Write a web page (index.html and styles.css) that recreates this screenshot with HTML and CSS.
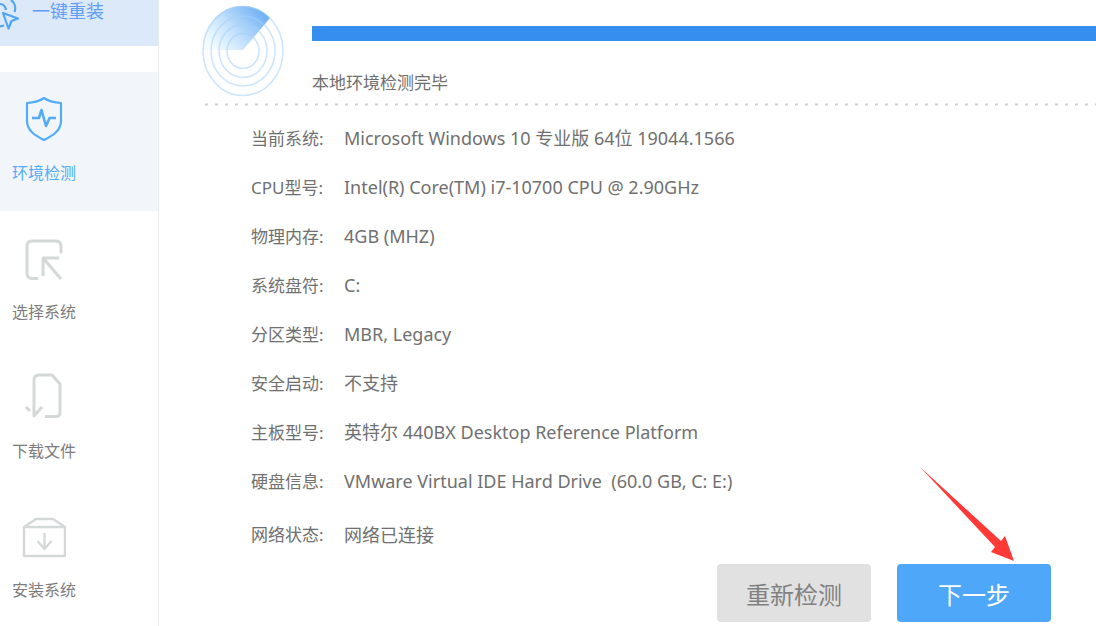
FILE: index.html
```html
<!DOCTYPE html>
<html lang="zh-CN">
<head>
<meta charset="utf-8">
<title>一键重装</title>
<link rel="stylesheet" href="styles.css">
</head>
<body>
<div class="app">
  <aside class="sidebar">
    <a class="brand" href="#">
      <svg class="brand-icon" width="20" height="32" viewBox="0 0 20 32" fill="none" stroke="#4fa6f7" stroke-width="2.2">
        <path d="M11 0C15 3 16 8 14.500 12"/>
        <path d="M0 4Q5 4 6 10"/>
        <path d="M0 26.500L4 25.500"/>
        <path d="M3 13L18 18.500L11.500 21L8.500 28.500Z" stroke-linejoin="round"/>
      </svg>
      <span>一键重装</span>
    </a>
    <nav class="steps">
      <a class="step active" href="#">
        <svg width="44" height="48" viewBox="0 0 44 48" fill="none" stroke="currentColor" stroke-width="2.2" stroke-linejoin="round">
          <path d="M22 3C17 6.500 11 7.500 5 8V26C5 36 14 41 22 45C30 41 39 36 39 26V8C33 7.500 27 6.500 22 3Z"/>
          <path d="M10 23H17L19.500 15L24 31L27.500 23H34" stroke-width="2.6"/>
        </svg>
        <span>环境检测</span>
      </a>
      <a class="step" href="#">
        <svg width="44" height="48" viewBox="0 0 44 48" fill="none" stroke="#d5d8d8" stroke-width="3" stroke-linecap="round" stroke-linejoin="round">
          <path d="M39 18V12Q39 7 34 7H10Q5 7 5 12V39Q5 44.500 10 44.500H15"/>
          <path d="M21 42V24H37M21 24L39 45" stroke-linecap="butt"/>
        </svg>
        <span>选择系统</span>
      </a>
      <a class="step" href="#">
        <svg width="44" height="48" viewBox="0 0 44 48" fill="none" stroke="#d5d8d8" stroke-width="3" stroke-linejoin="round">
          <path d="M4 34L8 38M20 34L12 43V7Q12 2 17 2H30L38 11V39Q38 43.500 34 43.500H23"/>
        </svg>
        <span>下载文件</span>
      </a>
      <a class="step" href="#">
        <svg width="44" height="48" viewBox="0 0 44 48" fill="none" stroke="#d5d8d8" stroke-width="2.4" stroke-linejoin="round">
          <path d="M2 15H43V44H2ZM2 15L14 7H31L43 15"/>
          <path d="M22.500 21V37M15.500 29L22.500 37L29.500 29"/>
        </svg>
        <span>安装系统</span>
      </a>
    </nav>
  </aside>

  <main class="content">
    <header class="status">
      <svg width="84" height="92" viewBox="0 0 84 92" fill="none">
        <defs>
          <linearGradient id="sweep" x1="0" y1="0.900" x2="1" y2="0.300">
            <stop offset="0.100" stop-color="#f4fcff"/>
            <stop offset="0.500" stop-color="#c2e0fc"/>
            <stop offset="1" stop-color="#6eb0f4"/>
          </linearGradient>
        </defs>
        <path d="M42 45H1C2 20 19 1 42 1C52 1 61 5 69 13Z" fill="url(#sweep)"/>
        <g stroke="#a6cffa" stroke-opacity="0.550" stroke-width="1.600">
          <ellipse cx="42" cy="46" rx="40" ry="44.500"/>
          <ellipse cx="42" cy="46" rx="32" ry="35"/>
          <ellipse cx="42" cy="46" rx="24" ry="26.500"/>
          <ellipse cx="42" cy="46" rx="16" ry="17.500"/>
        </g>
      </svg>
      <div class="status-text">
        <div class="bar" role="progressbar" aria-valuenow="100" aria-label="本地环境检测"></div>
        <p>本地环境检测完毕</p>
      </div>
    </header>
    <svg class="divider" height="3" aria-hidden="true"><line x1="2" y1="1.500" x2="100%" y2="1.500" stroke="#cfcfcf" stroke-width="2" stroke-dasharray="3 7"/></svg>

    <dl class="info">
      <div><dt>当前系统:</dt><dd>Microsoft Windows 10 专业版 64位 19044.1566</dd></div>
      <div><dt>CPU型号:</dt><dd>Intel(R) Core(TM) i7-10700 CPU @ 2.90GHz</dd></div>
      <div><dt>物理内存:</dt><dd>4GB (MHZ)</dd></div>
      <div><dt>系统盘符:</dt><dd>C:</dd></div>
      <div><dt>分区类型:</dt><dd>MBR, Legacy</dd></div>
      <div><dt>安全启动:</dt><dd>不支持</dd></div>
      <div><dt>主板型号:</dt><dd>英特尔 440BX Desktop Reference Platform</dd></div>
      <div><dt>硬盘信息:</dt><dd>VMware Virtual IDE Hard Drive&nbsp; (60.0 GB, C: E:)</dd></div>
      <div><dt>网络状态:</dt><dd>网络已连接</dd></div>
    </dl>

    <footer class="actions">
      <button class="btn" type="button">重新检测</button>
      <div class="next">
        <button class="btn primary" type="button">下一步</button>
        <svg class="pointer" width="96" height="96" viewBox="0 0 96 96" aria-hidden="true">
          <path d="M2 1L83 75L87 70L96 95L73 86L77 81Z" fill="#ff3936"/>
        </svg>
      </div>
    </footer>
  </main>
</div>
</body>
</html>
```
FILE: styles.css
```css
* { box-sizing: border-box; }

body {
  margin: 0;
  background: #fff;
  color: #707070;
  font-family: "Noto Sans", "Noto Sans CJK SC", sans-serif;
  font-size: 17px;
}

.app {
  display: flex;
  height: 100vh;
  overflow: hidden;
}

.sidebar {
  flex: 0 0 159px;
  border-right: 1px solid #e8eaec;
}

.brand {
  display: flex;
  gap: 12px;
  height: 46px;
  background: #dce9f9;
  color: #5f9ef5;
  font-size: 18px;
  line-height: 22px;
  text-decoration: none;
}

.steps { padding-top: 26px; }

.step {
  display: flex;
  flex-direction: column;
  align-items: flex-start;
  gap: 18px;
  height: 139px;
  padding: 23px 12px 0;
  color: #7c7c7c;
  font-size: 16px;
  line-height: 24px;
  text-decoration: none;
}

.step svg { margin-left: 10px; }

.step.active {
  background: #f2f6fb;
  color: #53acf8;
}

.content {
  flex: 1;
  min-width: 0;
}

.status {
  display: flex;
  gap: 27px;
  padding: 5px 0 0 42px;
}

.status-text {
  flex: 1;
  padding-top: 21px;
}

.status-text p {
  margin: 0;
  padding-top: 30px;
  line-height: 24px;
}

.bar {
  height: 15px;
  background: #368eef;
}

.divider {
  display: block;
  width: calc(100% - 44px);
  margin: 6px 0 0 44px;
}

.info {
  margin: 0;
  padding: 8px 0 0 92px;
}

.info div {
  display: flex;
  height: 49px;
  line-height: 49px;
}

.info div:last-child {
  height: 54px;
  line-height: 58px;
}

.info dt { width: 93px; }

.info dd {
  margin: 0;
  font-size: 18px;
}

.actions {
  display: flex;
  justify-content: flex-end;
  gap: 26px;
  padding: 4px 45px 0 0;
}

.btn {
  width: 154px;
  height: 58px;
  padding: 0;
  border: 0;
  border-radius: 4px;
  background: #e1e1e1;
  color: #818181;
  font: inherit;
  font-size: 24px;
}

.btn.primary {
  background: #4ea7f9;
  color: #fff;
}

.next { position: relative; }

.pointer {
  position: absolute;
  right: 37px;
  bottom: 60px;
}
```
